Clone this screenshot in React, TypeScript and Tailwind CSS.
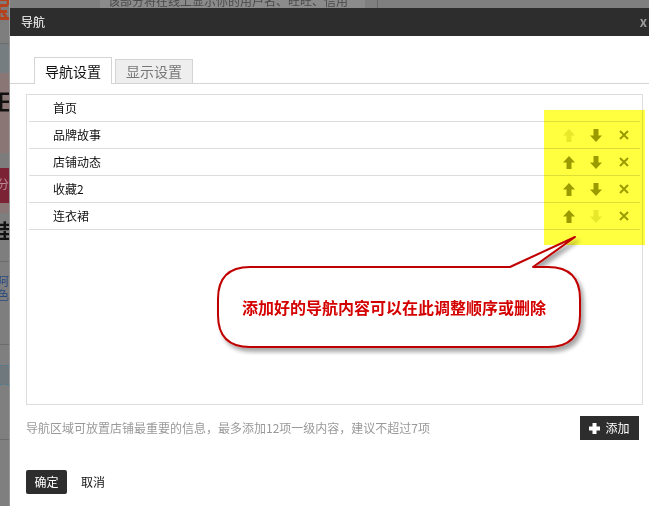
import React from "react";

const font = { fontFamily: '"Noto Sans CJK SC", "Liberation Sans", sans-serif' };

type NavItem = { label: string; up: boolean; down: boolean; actions: boolean };

const items: NavItem[] = [
  { label: "首页", up: false, down: false, actions: false },
  { label: "品牌故事", up: false, down: true, actions: true },
  { label: "店铺动态", up: true, down: true, actions: true },
  { label: "收藏2", up: true, down: true, actions: true },
  { label: "连衣裙", up: true, down: false, actions: true },
];

function ArrowUp({ enabled }: { enabled: boolean }) {
  return (
    <svg width="12" height="13" viewBox="0 0 12 13">
      <path d="M6 0 L12 6.5 L8.5 6.5 L8.5 13 L3.5 13 L3.5 6.5 L0 6.5 Z" fill={enabled ? "#9b9b00" : "#e8e8a8"} />
    </svg>
  );
}

function ArrowDown({ enabled }: { enabled: boolean }) {
  return (
    <svg width="12" height="13" viewBox="0 0 12 13">
      <path d="M6 13 L12 6.5 L8.5 6.5 L8.5 0 L3.5 0 L3.5 6.5 L0 6.5 Z" fill={enabled ? "#9b9b00" : "#e8e8a8"} />
    </svg>
  );
}

function Cross() {
  return (
    <svg width="10" height="10" viewBox="0 0 10 10">
      <path d="M1 1 L9 9 M9 1 L1 9" stroke="#9b9b00" strokeWidth="2" />
    </svg>
  );
}

function Callout() {
  return (
    <div className="pointer-events-none absolute left-[200px] top-[230px] h-[125px] w-[390px]">
      <svg width="390" height="125" viewBox="0 0 390 125" className="absolute left-0 top-0">
        <defs>
          <filter id="sh" x="-10%" y="-10%" width="120%" height="130%">
            <feDropShadow dx="3" dy="4" stdDeviation="2" floodColor="#000" floodOpacity="0.35" />
          </filter>
        </defs>
        <path
          d="M50 37 L310 37 L375 7 L333 37 L348 37 Q380 37 380 69 L380 85 Q380 117 348 117 L50 117 Q18 117 18 85 L18 69 Q18 37 50 37 Z"
          fill="#fff"
          stroke="#c00000"
          strokeWidth="2"
          strokeLinejoin="round"
          filter="url(#sh)"
        />
      </svg>
      <div className="absolute left-[42px] top-[69px] whitespace-nowrap text-[16px] font-bold leading-[16px] text-[#d40000]">
        添加好的导航内容可以在此调整顺序或删除
      </div>
    </div>
  );
}

function PageBehind() {
  return (
    <div className="flex h-[506px] w-[649px] bg-[#7f7f7f]">
      <div className="flex w-[10px] flex-col overflow-hidden border-r border-[#9a9a9a]">
        <div className="h-[25px] overflow-hidden bg-[#7d7d7d]">
          <span className="-ml-[14px] -mt-[6px] block text-[26px] font-bold leading-none text-[#b5421c]">宝</span>
        </div>
        <div className="h-[19px] border-b border-[#6c6c6c] bg-[#7e7e7e]" />
        <div className="h-[29px] bg-[#757d80]" />
        <div className="h-[80px] overflow-hidden bg-[#8b7676] pt-[16px]">
          <span className="-ml-[10px] block text-[22px] font-bold leading-none text-[#111]">王</span>
        </div>
        <div className="h-[15px] bg-[#7c7c7c]" />
        <div className="h-[35px] overflow-hidden bg-[#7b2234] pt-[10px]">
          <span className="-ml-[3px] block whitespace-nowrap text-[12px] leading-none text-[#b98a94]">分</span>
        </div>
        <div className="h-[10px] bg-[#8b7676]" />
        <div className="h-[49px] overflow-hidden border-b border-[#6b6b6b] bg-[#7e7e7e] pt-[8px]">
          <span className="-ml-[8px] block text-[20px] font-bold leading-none text-[#111]">佳</span>
        </div>
        <div className="h-[83px] overflow-hidden border-b border-[#6b6b6b] bg-[#7e7e7e] pt-[12px]">
          <span className="-ml-[3px] block whitespace-nowrap text-[12px] leading-[14px] text-[#2a4a80]">阿</span>
          <span className="-ml-[3px] block whitespace-nowrap text-[12px] leading-[14px] text-[#2a4a80]">色</span>
        </div>
        <div className="h-[20px]" />
        <div className="h-[20px] border-y border-dashed border-[#4f7c92] bg-[#6f797d]" />
        <div className="h-[55px] border-b border-[#6b6b6b]" />
        <div className="flex-1" />
      </div>
      <div className="flex flex-1 items-start">
        <div className="ml-[90px] h-[8px] w-[265px] overflow-hidden bg-[#8b8b8b] pl-[8px]">
          <span className="-mt-[5px] block whitespace-nowrap text-[12px] leading-[12px] text-[#4a4a4a]">
            该部分将在线上显示你的用户名、旺旺、信用
          </span>
        </div>
        <div className="ml-[12px] h-[8px] w-[1px] bg-[#666]" />
      </div>
    </div>
  );
}

export default function App() {
  return (
    <div className="relative h-[506px] w-[649px] overflow-hidden" style={font}>
      <PageBehind />

      <div className="absolute left-[10px] top-[8px] flex h-[498px] w-[645px] flex-col bg-white">
        {/* header */}
        <div className="flex h-[28px] items-center justify-between bg-[#2d2d2d] pl-[11px] pr-[8px]">
          <span className="text-[12px] text-white">导航</span>
          <span className="text-[13px] font-bold text-[#9a9a9a]">x</span>
        </div>

        {/* tabs */}
        <div className="mt-[21px] flex items-end gap-[3px] border-b border-[#d4d4d4] pl-[24px]">
          <div className="-mb-px flex h-[27px] w-[78px] items-center justify-center border border-b-0 border-[#d4d4d4] bg-white text-[14px] text-[#111]">
            导航设置
          </div>
          <div className="flex h-[24px] w-[78px] items-center justify-center border border-b-0 border-[#d4d4d4] bg-[#eeeeee] text-[14px] text-[#777]">
            显示设置
          </div>
        </div>

        {/* list */}
        <div className="ml-[16px] mr-[12px] mt-[10px] h-[311px] border border-[#dddddd] px-[2px]">
          {items.map((item) => (
            <div key={item.label} className="flex h-[27px] items-center border-b border-[#dddddd] pl-[24px]">
              <span className="flex-1 text-[12px] text-[#111]">{item.label}</span>
              {item.actions && (
                <div className="flex items-center">
                  <div className="flex w-[27px] justify-center"><ArrowUp enabled={item.up} /></div>
                  <div className="flex w-[27px] justify-center"><ArrowDown enabled={item.down} /></div>
                  <div className="flex w-[31px] justify-center pr-[1px]"><Cross /></div>
                </div>
              )}
            </div>
          ))}
        </div>

        {/* hint + add */}
        <div className="ml-[16px] mr-[16px] mt-[11px] flex items-start justify-between">
          <span className="text-[12px] leading-[24px] text-[#999]">
            导航区域可放置店铺最重要的信息，最多添加12项一级内容，建议不超过7项
          </span>
          <button className="flex h-[24px] w-[59px] items-center justify-center gap-[5px] bg-[#2d2d2d] text-[12px] text-white">
            <svg width="11" height="11" viewBox="0 0 11 11">
              <path d="M3.5 0 H7.5 V3.5 H11 V7.5 H7.5 V11 H3.5 V7.5 H0 V3.5 H3.5 Z" fill="#fff" />
            </svg>
            添加
          </button>
        </div>

        {/* footer */}
        <div className="ml-[16px] mt-[30px] flex items-center gap-[14px]">
          <button className="flex h-[24px] w-[41px] items-center justify-center rounded-[2px] bg-[#2d2d2d] text-[12px] text-white">
            确定
          </button>
          <span className="text-[12px] text-[#111]">取消</span>
        </div>
      </div>

      {/* yellow highlight over action column */}
      <div className="pointer-events-none absolute left-[544px] top-[110px] h-[135px] w-[101px] bg-[#ffff40] mix-blend-multiply" />

      <Callout />
    </div>
  );
}
